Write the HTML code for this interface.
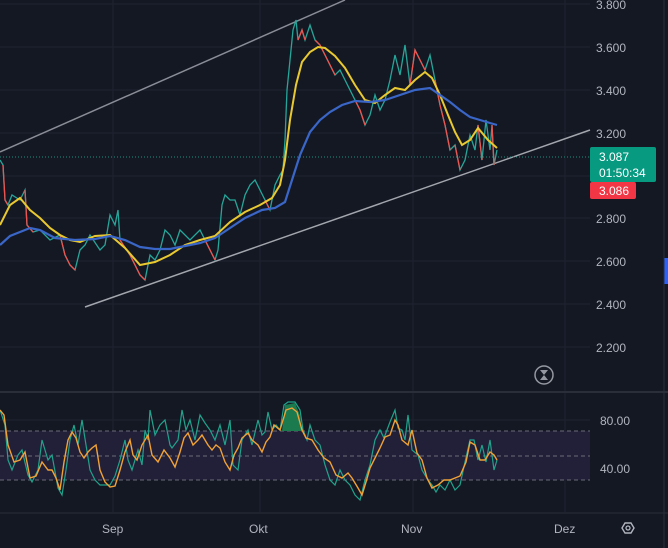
<!DOCTYPE html>
<html><head><meta charset="utf-8"><style>
html,body{margin:0;padding:0;background:#131722;width:668px;height:548px;overflow:hidden;font-family:"Liberation Sans",sans-serif}
</style></head><body>
<svg width="668" height="548" viewBox="0 0 668 548" xmlns="http://www.w3.org/2000/svg" style="position:absolute;left:0;top:0">
<rect width="668" height="548" fill="#141823"/>
<!-- grid -->
<g stroke="#1f2330" stroke-width="1">
<line x1="113" y1="0" x2="113" y2="512"/><line x1="260" y1="0" x2="260" y2="512"/><line x1="413" y1="0" x2="413" y2="512"/><line x1="565" y1="0" x2="565" y2="512"/>
<line x1="0" y1="4" x2="590" y2="4"/><line x1="0" y1="47" x2="590" y2="47"/><line x1="0" y1="90" x2="590" y2="90"/><line x1="0" y1="133" x2="590" y2="133"/><line x1="0" y1="176" x2="590" y2="176"/><line x1="0" y1="218" x2="590" y2="218"/><line x1="0" y1="261" x2="590" y2="261"/><line x1="0" y1="304" x2="590" y2="304"/><line x1="0" y1="347" x2="590" y2="347"/>
<line x1="0" y1="420" x2="590" y2="420"/><line x1="0" y1="468" x2="590" y2="468"/>
</g>
<line x1="0" y1="392" x2="668" y2="392" stroke="#2a2e39" stroke-width="2"/>
<line x1="0" y1="513" x2="668" y2="513" stroke="#2a2e39" stroke-width="1"/>
<!-- channel -->
<line x1="0" y1="152" x2="345" y2="0" stroke="#8a8d96" stroke-width="1.5"/>
<line x1="85" y1="307" x2="590" y2="130" stroke="#a3a6ad" stroke-width="1.5"/>
<line x1="0" y1="157" x2="590" y2="157" stroke="#1f8f7e" stroke-width="1" stroke-dasharray="1 2"/>
<!-- price -->
<polyline fill="none" stroke="#26a69a" stroke-width="1.3" points="0,160 3,165 5,200 8,205 12,195 20,200 25,190 27,225 33,232 40,230 50,240 60,235 65,255 70,265 75,270 80,250 85,245 90,235 100,250 105,245 110,215 115,225 118,210 120,240 130,255 140,275 145,280 150,255 155,260 160,250 165,230 170,235 175,245 180,230 190,240 200,230 205,240 210,250 215,260 218,250 222,205 225,195 230,200 235,200 240,215 245,195 250,185 255,180 260,190 265,200 270,210 275,185 280,175 283,170 285,140 287,90 290,60 293,30 296,20 298,40 302,30 305,40 310,25 315,40 320,45 325,55 330,65 335,75 340,70 345,80 350,90 355,100 360,110 365,125 370,115 375,95 380,110 385,100 390,80 395,55 400,75 405,45 410,85 415,50 420,60 425,70 430,55 435,80 440,105 445,125 450,150 455,145 460,170 465,160 470,135 475,150 478,125 482,160 486,120 490,150 492,125 494,165 497,150"/>
<g fill="none" stroke="#ef5350" stroke-width="1.3">
<polyline points="3,165 5,200 8,205"/><polyline points="25,190 27,225 33,232"/><polyline points="60,235 65,255 70,265 75,270"/><polyline points="120,240 130,255 140,275 145,280"/><polyline points="205,240 210,250 215,260"/><polyline points="265,200 270,210"/><polyline points="298,40 302,30 305,40"/><polyline points="315,40 320,45 325,55 330,65 335,75"/><polyline points="355,100 360,110 365,125"/><polyline points="410,85 415,50 420,60 425,70"/><polyline points="435,80 440,105 445,125 450,150"/><polyline points="455,145 460,170"/><polyline points="478,125 482,160"/><polyline points="492,125 494,165"/>
</g>
<polyline fill="none" stroke="#e9c930" stroke-width="2" points="0,225 10,205 20,198 30,210 40,218 50,228 60,235 70,240 80,242 95,236 110,235 125,248 140,265 155,262 170,255 185,245 200,240 215,236 230,222 245,212 260,205 272,198 280,185 285,160 290,120 296,85 302,62 310,52 318,47 325,48 335,56 345,68 355,85 365,100 375,103 385,95 395,88 405,90 415,80 425,72 432,78 440,95 448,115 455,132 462,145 470,140 478,128 488,140 497,148"/>
<polyline fill="none" stroke="#3a66c8" stroke-width="2.2" points="0,245 10,236 20,232 30,228 40,230 55,238 75,240 95,239 110,236 125,240 140,247 155,249 170,249 185,246 200,243 215,238 230,228 245,218 262,210 275,208 285,202 292,180 300,155 310,132 320,120 330,112 342,105 355,101 370,102 385,100 400,95 415,90 430,88 440,95 450,102 460,110 470,117 480,120 490,123 497,125"/>
<!-- hourglass icon -->
<circle cx="544" cy="375" r="9" fill="none" stroke="#9598a1" stroke-width="1.5"/>
<path d="M540,370 h8 l-4,5 l4,5 h-8 l4,-5 z" fill="#9598a1"/>
<!-- RSI -->
<rect x="0" y="431" width="590" height="49" fill="#221f38"/>
<g stroke="#6a6d78" stroke-width="1" stroke-dasharray="4 3"><line x1="0" y1="431" x2="590" y2="431"/><line x1="0" y1="456" x2="590" y2="456"/><line x1="0" y1="480" x2="590" y2="480"/></g>
<path d="M282,431 L285,405 L295,403 L300,415 L302,431 Z" fill="#1b7a4e"/>
<polyline fill="none" stroke="#1fa38c" stroke-width="1.2" points="0,410 5,425 8,460 12,470 18,455 22,450 28,475 32,482 38,470 42,440 48,460 52,455 58,488 62,495 66,470 70,440 74,425 78,445 82,420 86,445 90,470 95,480 100,485 105,485 110,485 115,476 120,460 125,440 128,460 132,470 138,450 142,465 145,430 148,440 150,410 155,435 160,425 165,420 170,445 172,448 178,440 182,410 186,430 190,420 195,440 200,415 205,423 210,430 215,440 220,425 225,445 230,420 233,465 238,470 242,440 248,430 252,445 258,420 262,435 265,432 268,412 272,430 276,425 280,430 284,405 288,402 295,402 300,410 303,430 307,440 310,425 315,440 320,445 325,465 330,480 335,485 340,470 345,480 350,485 355,495 360,500 365,480 370,465 375,440 380,430 384,438 390,422 395,410 398,428 402,430 405,440 408,415 412,450 418,455 422,470 428,480 432,485 436,492 440,485 445,490 450,480 455,490 460,485 465,462 470,440 474,440 478,460 482,445 486,462 490,440 494,470 497,460"/>
<polyline fill="none" stroke="#f0a236" stroke-width="1.4" points="0,410 4,415 8,445 14,462 20,460 25,452 30,478 36,476 42,462 48,470 52,470 56,478 60,490 64,462 68,440 72,432 76,438 80,452 84,458 88,452 92,448 96,445 100,470 105,482 110,487 115,486 120,470 125,452 130,440 133,455 137,460 142,445 148,435 152,455 158,462 164,450 170,458 175,467 180,452 184,438 188,433 193,445 198,440 202,435 208,445 212,450 216,445 220,448 225,462 230,470 234,455 238,448 242,438 248,433 252,440 258,445 262,452 266,442 270,437 274,425 280,430 286,410 292,408 297,412 302,430 306,438 312,440 318,450 324,458 330,462 336,475 342,478 348,473 352,478 358,488 362,495 366,482 370,468 375,458 380,448 385,437 390,435 395,420 398,425 402,440 408,445 412,430 417,453 422,460 427,478 432,488 438,485 444,480 450,480 455,478 460,476 466,462 470,442 475,445 480,460 485,460 490,452 494,455 497,460"/>
<!-- axes text -->
<g fill="#b2b5be" font-family="Liberation Sans, sans-serif" font-size="12">
<text x="596" y="9">3.800</text><text x="596" y="52">3.600</text><text x="596" y="95">3.400</text><text x="596" y="138">3.200</text><text x="596" y="223">2.800</text><text x="596" y="266">2.600</text><text x="596" y="309">2.400</text><text x="596" y="352">2.200</text>
<text x="600" y="425">80.00</text><text x="600" y="473">40.00</text>
<text x="102" y="533">Sep</text><text x="249" y="533">Okt</text><text x="401" y="533">Nov</text><text x="554" y="533">Dez</text>
</g>
<rect x="590" y="147" width="66" height="35" rx="2" fill="#089981"/>
<text x="599" y="161" fill="#fff" font-size="12" font-family="Liberation Sans, sans-serif">3.087</text>
<text x="599" y="177" fill="#fff" font-size="12" font-family="Liberation Sans, sans-serif">01:50:34</text>
<rect x="590" y="182" width="46" height="17" rx="2" fill="#f23645"/>
<text x="599" y="195" fill="#fff" font-size="12" font-family="Liberation Sans, sans-serif">3.086</text>
<rect x="664" y="258" width="4" height="26" fill="#2962ff"/>
<line x1="664" y1="0" x2="664" y2="548" stroke="#2a2e39"/>
<path d="M622,528 l3,-5 h6 l3,5 l-3,5 h-6 z" fill="none" stroke="#b2b5be" stroke-width="1.4"/>
<circle cx="628" cy="528" r="2" fill="none" stroke="#b2b5be" stroke-width="1.3"/>
</svg>
</body></html>
